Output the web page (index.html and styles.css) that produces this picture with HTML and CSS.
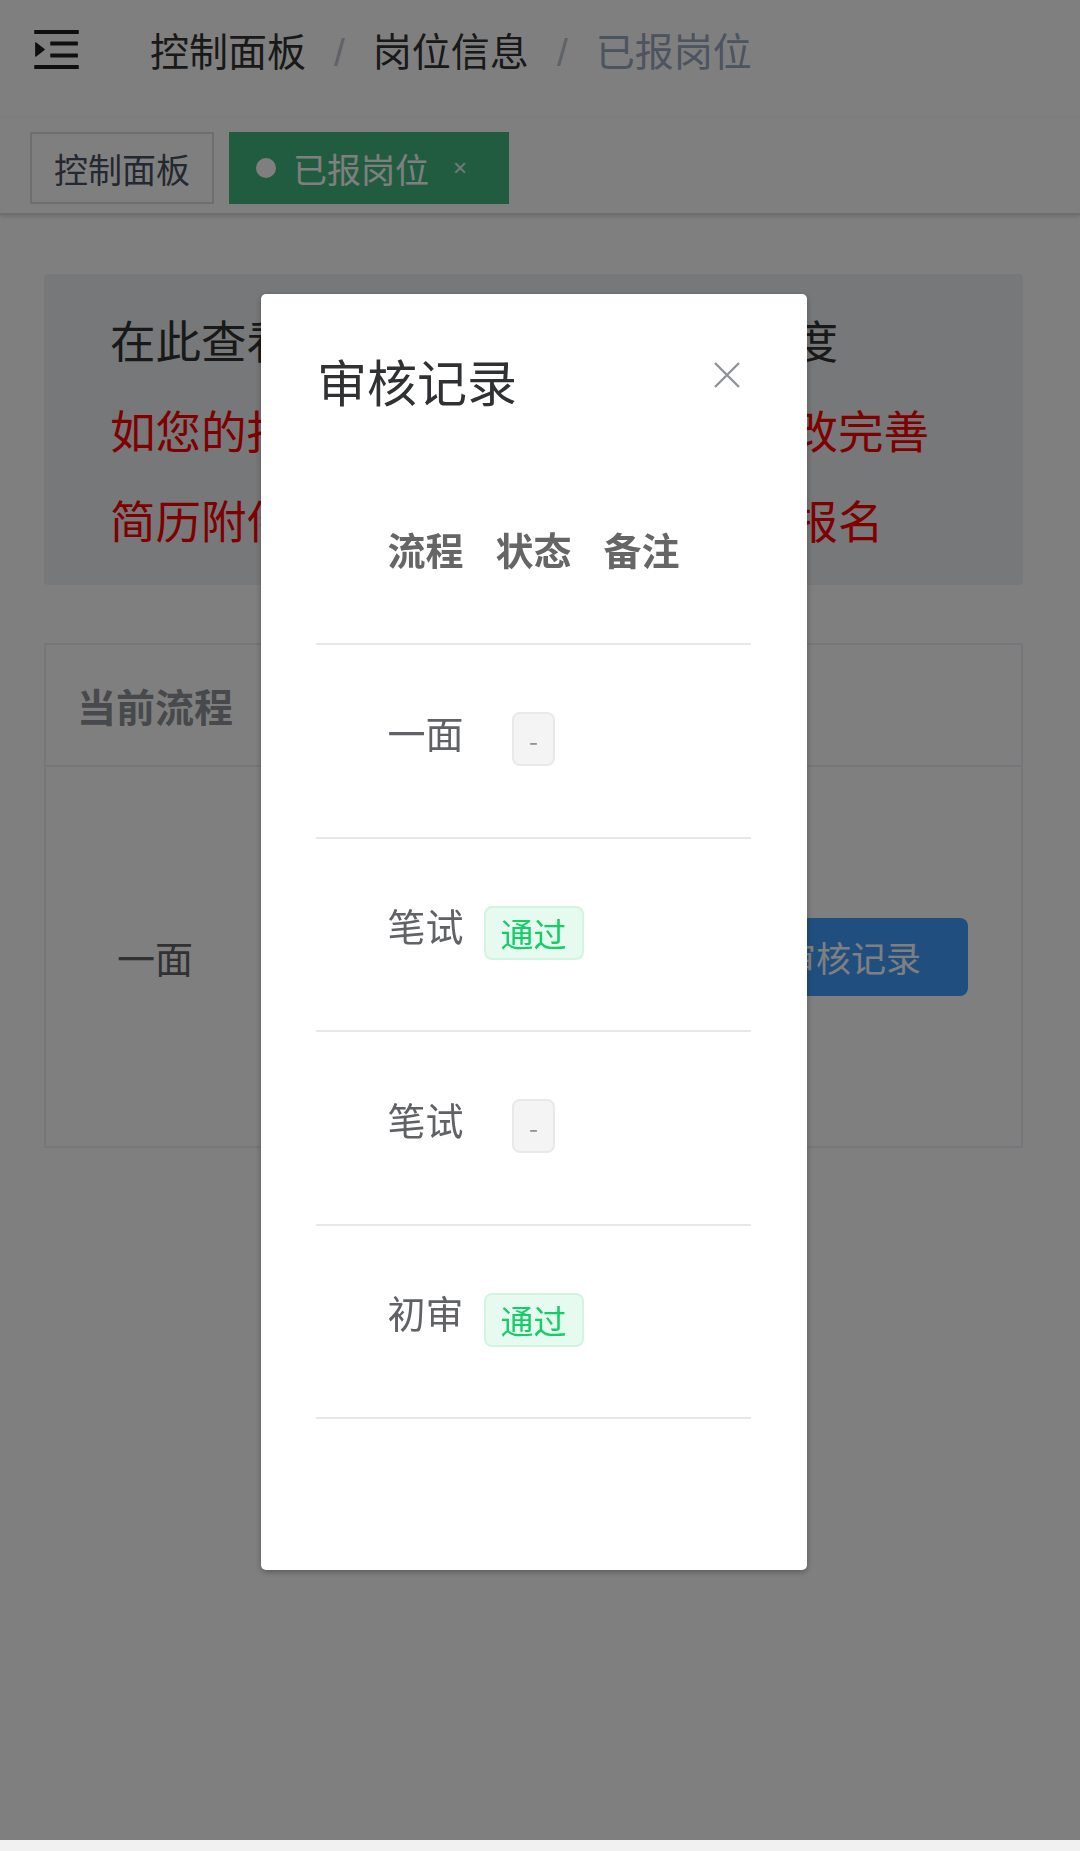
FILE: index.html
```html
<!DOCTYPE html>
<html lang="zh-CN">
<head>
<meta charset="utf-8">
<title>已报岗位</title>
<link rel="stylesheet" href="styles.css">
</head>
<body>
<div class="app">
  <header class="navbar">
    <svg class="hamburger" viewBox="0 0 1024 1024" aria-hidden="true">
      <path d="M408 442h480c4.4 0 8-3.6 8-8v-56c0-4.4-3.6-8-8-8H408c-4.4 0-8 3.6-8 8v56c0 4.4 3.6 8 8 8zm-8 204c0 4.4 3.6 8 8 8h480c4.4 0 8-3.6 8-8v-56c0-4.4-3.6-8-8-8H408c-4.4 0-8 3.6-8 8v56zm504-486H120c-4.4 0-8 3.6-8 8v56c0 4.4 3.6 8 8 8h784c4.4 0 8-3.6 8-8v-56c0-4.4-3.6-8-8-8zm0 632H120c-4.4 0-8 3.6-8 8v56c0 4.4 3.6 8 8 8h784c4.4 0 8-3.6 8-8v-56c0-4.4-3.6-8-8-8zM142.4 642.1L298.7 519a8.84 8.84 0 0 0 0-13.9L142.4 381.9c-5.8-4.6-14.4-.5-14.4 6.9v246.3a8.9 8.9 0 0 0 14.4 7z"/>
    </svg>
    <nav class="breadcrumb">
      <span class="crumb">控制面板</span><span class="sep">/</span><span class="crumb">岗位信息</span><span class="sep">/</span><span class="crumb crumb-last">已报岗位</span>
    </nav>
  </header>

  <div class="tags-view">
    <span class="tag-item">控制面板</span>
    <span class="tag-item tag-active"><span class="dot"></span>已报岗位<span class="tag-close">×</span></span>
  </div>

  <main class="content">
    <div class="notice">
      <p class="notice-line">在此查看您已报名的岗位及审核进度</p>
      <p class="notice-line notice-red">如您的报名信息被退回，请及时修改完善</p>
      <p class="notice-line notice-red">简历附件后于截止日期前重新提交报名</p>
    </div>

    <div class="card">
      <div class="card-row card-head">
        <div class="cell cell-first">当前流程</div>
        <div class="cell cell-mid">审核状态</div>
        <div class="cell cell-last"></div>
      </div>
      <div class="card-row card-body">
        <div class="cell cell-first">一面</div>
        <div class="cell cell-mid">待审核</div>
        <div class="cell cell-last"><span class="btn-primary">审核记录</span></div>
      </div>
    </div>
  </main>
</div>

<div class="mask"></div>

<div class="dialog-wrap">
  <div class="dialog">
    <div class="dialog-header">
      <span class="dialog-title">审核记录</span>
      <svg class="dialog-close" viewBox="0 0 28 28" aria-hidden="true">
        <path d="M2 2L26 26M26 2L2 26"/>
      </svg>
    </div>
    <div class="dialog-body">
      <div class="rec-row rec-head">
        <span class="rc-a">流程</span>
        <span class="rc-b">状态</span>
        <span class="rc-c">备注</span>
      </div>
      <div class="rec-row">
        <span class="rc-a rec-text">一面</span>
        <span class="rc-b"><span class="tag tag-info">-</span></span>
        <span class="rc-c"></span>
      </div>
      <div class="rec-row">
        <span class="rc-a rec-text">笔试</span>
        <span class="rc-b"><span class="tag tag-success">通过</span></span>
        <span class="rc-c"></span>
      </div>
      <div class="rec-row">
        <span class="rc-a rec-text">笔试</span>
        <span class="rc-b"><span class="tag tag-info">-</span></span>
        <span class="rc-c"></span>
      </div>
      <div class="rec-row">
        <span class="rc-a rec-text">初审</span>
        <span class="rc-b"><span class="tag tag-success">通过</span></span>
        <span class="rc-c"></span>
      </div>
    </div>
  </div>
</div>

<div class="sysbar"></div>
</body>
</html>
```

FILE: styles.css
```css
* {
  box-sizing: border-box;
}

html, body {
  margin: 0;
  padding: 0;
  height: 100%;
}

body {
  font-family: "Noto Sans CJK SC", "Noto Sans", "Liberation Sans", sans-serif;
  background: #ffffff;
  color: #303133;
  overflow: hidden;
}

p {
  margin: 0;
}

/* ---------- navbar ---------- */
.navbar {
  height: 118px;
  display: flex;
  align-items: flex-start;
  background: #ffffff;
  box-shadow: 0 1px 4px rgba(0, 21, 41, 0.08);
}

.hamburger {
  width: 57px;
  height: 57px;
  margin: 21px 0 0 28px;
  fill: #1f1f1f;
  flex: none;
}

.breadcrumb {
  margin: 20px 0 0 65px;
  font-size: 39px;
  line-height: 58px;
  white-space: nowrap;
}

.crumb {
  color: #333333;
}

.crumb-last {
  color: #97a8be;
}

.sep {
  color: #c0c4cc;
  margin: 0 28px;
  font-family: "Liberation Sans", sans-serif;
}

/* ---------- tags view ---------- */
.tags-view {
  height: 97px;
  display: flex;
  align-items: flex-start;
  gap: 15px;
  padding: 14px 0 0 30px;
  background: #ffffff;
  border-bottom: 2px solid #d8dce5;
  box-shadow: 0 2px 4px rgba(0, 0, 0, 0.12), 0 0 4px rgba(0, 0, 0, 0.04);
}

.tag-item {
  height: 72px;
  display: inline-flex;
  align-items: center;
  padding: 0 22px;
  border: 2px solid #d8dce5;
  background: #ffffff;
  color: #495060;
  font-size: 34px;
  white-space: nowrap;
}

.tag-active {
  background: #42b983;
  border-color: #42b983;
  color: #ffffff;
  padding: 0 30px 0 25px;
}

.dot {
  width: 20px;
  height: 20px;
  border-radius: 50%;
  background: #ffffff;
  margin-right: 17px;
}

.tag-close {
  width: 34px;
  margin-left: 14px;
  text-align: center;
  font-size: 24px;
  font-family: "Liberation Sans", sans-serif;
  color: #eaf7f0;
}

/* ---------- content ---------- */
.content {
  padding: 59px 57px 0 44px;
}

.notice {
  background: #eff1f4;
  padding: 20px 0 21px 66px;
  border-radius: 4px;
}

.notice-line {
  font-size: 45.5px;
  line-height: 90px;
  color: #333333;
  white-space: nowrap;
}

.notice-red {
  color: #ff0000;
}

.card {
  margin-top: 58px;
  border: 2px solid #ebeef5;
}

.card-row {
  display: grid;
  grid-template-columns: 218px 1fr 320px;
  align-items: center;
}

.card-head {
  height: 122px;
  border-bottom: 2px solid #ebeef5;
  color: #909399;
  font-weight: 700;
  font-size: 39px;
}

.card-body {
  height: 379px;
  color: #606266;
  font-size: 38px;
}

.cell {
  text-align: center;
  white-space: nowrap;
}

.card-body .cell-last {
  text-align: right;
  padding-right: 53px;
}

.btn-primary {
  display: inline-flex;
  align-items: center;
  justify-content: center;
  width: 234px;
  height: 78px;
  background: #409eff;
  color: #ffffff;
  border-radius: 8px;
  font-size: 35px;
}

/* ---------- mask & dialog ---------- */
.mask {
  position: fixed;
  left: 0;
  top: 0;
  right: 0;
  bottom: 0;
  background: rgba(0, 0, 0, 0.5);
}

.dialog-wrap {
  position: fixed;
  left: 0;
  top: 0;
  right: 0;
  bottom: 0;
}

.dialog {
  width: 546px;
  height: 1276px;
  margin: 294px 0 0 261px;
  background: #ffffff;
  border-radius: 5px;
  box-shadow: 0 2px 6px rgba(0, 0, 0, 0.3);
}

.dialog-header {
  display: flex;
  justify-content: space-between;
  align-items: flex-start;
  padding: 56px 66px 0 56px;
}

.dialog-title {
  font-size: 50px;
  line-height: 60px;
  color: #303133;
}

.dialog-close {
  width: 28px;
  height: 28px;
  margin-top: 11px;
  fill: none;
  stroke: #909399;
  stroke-width: 2.4;
}

.dialog-body {
  padding: 0 56px 0 55px;
}

.rec-row {
  display: grid;
  grid-template-columns: 76px 100px 76px;
  column-gap: 20px;
  justify-content: center;
  align-items: center;
  height: 193.5px;
  padding-bottom: 10px;
  border-bottom: 2px solid #e6e8ee;
  font-size: 38px;
  color: #606266;
}

.rec-head {
  height: 235px;
  align-items: end;
  padding-bottom: 71px;
  font-weight: 700;
  color: #666666;
  line-height: 46px;
}

.rc-a {
  text-align: left;
  white-space: nowrap;
}

.rc-b {
  text-align: center;
  white-space: nowrap;
}

.rc-c {
  text-align: left;
  white-space: nowrap;
}

.rec-text {
  line-height: 46px;
  margin-bottom: 8px;
}

.tag {
  display: inline-flex;
  align-items: center;
  justify-content: center;
  height: 54px;
  padding: 0 15px;
  border: 2px solid;
  border-radius: 8px;
  font-size: 33px;
  font-weight: 400;
  vertical-align: middle;
}

.tag-info {
  background: #f4f4f5;
  border-color: #e9e9eb;
  color: #909399;
  font-size: 26px;
}

.tag-success {
  background: #e7faf0;
  border-color: #d0f5e0;
  color: #13ce66;
}

.sysbar {
  position: fixed;
  left: 0;
  right: 0;
  bottom: 0;
  height: 11px;
  background: #f1f1f1;
}
```
